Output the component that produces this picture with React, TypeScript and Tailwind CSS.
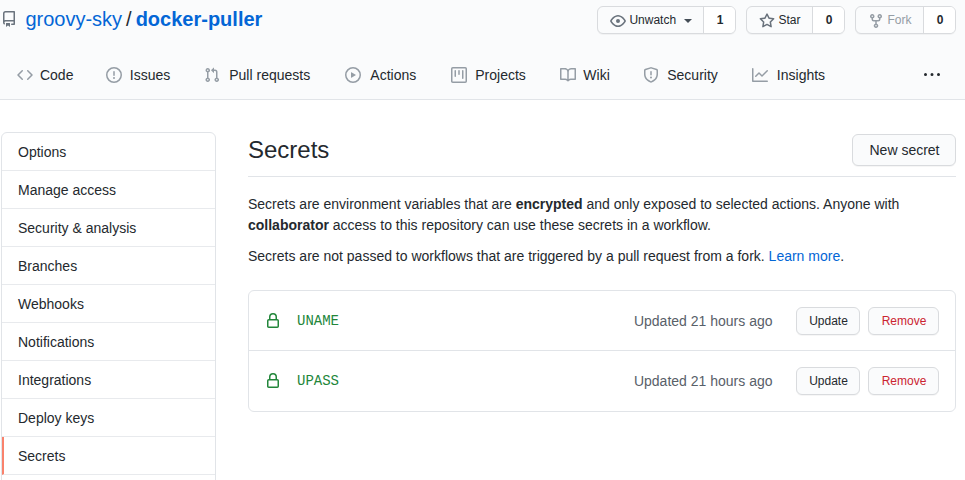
import React from "react";

const paths = {
  repo: "M2 2.5A2.5 2.5 0 014.5 0h8.75a.75.75 0 01.75.75v12.5a.75.75 0 01-.75.75h-2.5a.75.75 0 110-1.5h1.75v-2h-8a1 1 0 00-.714 1.7.75.75 0 01-1.072 1.05A2.495 2.495 0 012 11.5v-9zm10.5-1V9h-8c-.356 0-.694.074-1 .208V2.5a1 1 0 011-1h8zM5 12.25v3.25a.25.25 0 00.4.2l1.45-1.087a.25.25 0 01.3 0L8.6 15.7a.25.25 0 00.4-.2v-3.25a.25.25 0 00-.25-.25h-3.5a.25.25 0 00-.25.25z",
  code: "M4.72 3.22a.75.75 0 011.06 1.06L2.06 8l3.72 3.72a.75.75 0 11-1.06 1.06L.47 8.53a.75.75 0 010-1.06l4.25-4.25zm6.56 0a.75.75 0 10-1.06 1.06L13.94 8l-3.72 3.72a.75.75 0 101.06 1.06l4.25-4.25a.75.75 0 000-1.06l-4.25-4.25z",
  issue: "M8 1.5a6.5 6.5 0 100 13 6.5 6.5 0 000-13zM0 8a8 8 0 1116 0A8 8 0 010 8zm9 3a1 1 0 11-2 0 1 1 0 012 0zm-.25-6.25a.75.75 0 00-1.5 0v3.5a.75.75 0 001.5 0v-3.5z",
  pull: "M7.177 3.073L9.573.677A.25.25 0 0110 .854v4.792a.25.25 0 01-.427.177L7.177 3.427a.25.25 0 010-.354zM3.75 2.5a.75.75 0 100 1.5.75.75 0 000-1.5zm-2.25.75a2.25 2.25 0 113 2.122v5.256a2.251 2.251 0 11-1.5 0V5.372A2.25 2.25 0 011.5 3.25zM11 2.5h-1V4h1a1 1 0 011 1v5.628a2.251 2.251 0 101.5 0V5A2.5 2.5 0 0011 2.5zm1 10.25a.75.75 0 111.5 0 .75.75 0 01-1.5 0zM3.75 12a.75.75 0 100 1.5.75.75 0 000-1.5z",
  play: "M1.5 8a6.5 6.5 0 1113 0 6.5 6.5 0 01-13 0zM8 0a8 8 0 100 16A8 8 0 008 0zM6.379 5.227A.25.25 0 006 5.442v5.117a.25.25 0 00.379.214l4.264-2.559a.25.25 0 000-.428L6.379 5.227z",
  project: "M1.75 0A1.75 1.75 0 000 1.75v12.5C0 15.216.784 16 1.75 16h12.5A1.75 1.75 0 0016 14.25V1.75A1.75 1.75 0 0014.25 0H1.75zM1.5 1.75a.25.25 0 01.25-.25h12.5a.25.25 0 01.25.25v12.5a.25.25 0 01-.25.25H1.75a.25.25 0 01-.25-.25V1.75zM11.75 3a.75.75 0 00-.75.75v7.5a.75.75 0 001.5 0v-7.5a.75.75 0 00-.75-.75zm-8.25.75a.75.75 0 011.5 0v5.5a.75.75 0 01-1.5 0v-5.5zM8 3a.75.75 0 00-.75.75v3.5a.75.75 0 001.5 0v-3.5A.75.75 0 008 3z",
  book: "M0 1.75A.75.75 0 01.75 1h4.253c1.227 0 2.317.59 3 1.501A3.744 3.744 0 0111.006 1h4.245a.75.75 0 01.75.75v10.5a.75.75 0 01-.75.75h-4.507a2.25 2.25 0 00-1.591.659l-.622.621a.75.75 0 01-1.06 0l-.622-.621A2.25 2.25 0 005.258 13H.75a.75.75 0 01-.75-.75V1.75zm8.755 3a2.25 2.25 0 012.25-2.25H14.5v9h-3.757c-.71 0-1.4.201-1.992.572l.004-7.322zm-1.504 7.324l.004-5.073-.002-2.253A2.25 2.25 0 005.003 2.5H1.5v9h3.757a3.75 3.75 0 011.994.574z",
  shield: "M7.467.133a1.75 1.75 0 011.066 0l5.25 1.68A1.75 1.75 0 0115 3.48V7c0 1.566-.32 3.182-1.303 4.682-.983 1.498-2.585 2.813-5.032 3.855a1.7 1.7 0 01-1.33 0c-2.447-1.042-4.049-2.357-5.032-3.855C1.32 10.182 1 8.566 1 7V3.48a1.75 1.75 0 011.217-1.667l5.25-1.68zm.61 1.429a.25.25 0 00-.153 0l-5.25 1.68a.25.25 0 00-.174.238V7c0 1.358.275 2.666 1.057 3.86.784 1.194 2.121 2.34 4.366 3.297a.2.2 0 00.154 0c2.245-.956 3.582-2.104 4.366-3.298C13.225 9.666 13.5 8.36 13.5 7V3.48a.25.25 0 00-.174-.237l-5.25-1.68zM9 10.5a1 1 0 11-2 0 1 1 0 012 0zm-.25-5.75a.75.75 0 10-1.5 0v3a.75.75 0 001.5 0v-3z",
  graph: "M1.5 1.75a.75.75 0 00-1.5 0v12.5c0 .414.336.75.75.75h14.5a.75.75 0 000-1.5H1.5V1.75zm14.28 2.53a.75.75 0 00-1.06-1.06L10 7.94 7.53 5.47a.75.75 0 00-1.06 0L3.22 8.72a.75.75 0 001.06 1.06L7 7.06l2.47 2.47a.75.75 0 001.06 0l5.25-5.25z",
  dots: "M8 9a1.5 1.5 0 100-3 1.5 1.5 0 000 3zM1.5 9a1.5 1.5 0 100-3 1.5 1.5 0 000 3zm13 0a1.5 1.5 0 100-3 1.5 1.5 0 000 3z",
  eye: "M1.679 7.932c.412-.621 1.242-1.75 2.366-2.717C5.175 4.242 6.527 3.5 8 3.5c1.473 0 2.824.742 3.955 1.715 1.124.967 1.954 2.096 2.366 2.717a.119.119 0 010 .136c-.412.621-1.242 1.75-2.366 2.717C10.825 11.758 9.473 12.5 8 12.5c-1.473 0-2.824-.742-3.955-1.715C2.92 9.818 2.09 8.69 1.679 8.068a.119.119 0 010-.136zM8 2c-1.981 0-3.67.992-4.933 2.078C1.797 5.169.88 6.423.43 7.1a1.619 1.619 0 000 1.798c.45.678 1.367 1.932 2.637 3.024C4.329 13.008 6.019 14 8 14c1.981 0 3.67-.992 4.933-2.078 1.27-1.091 2.187-2.345 2.637-3.023a1.619 1.619 0 000-1.798c-.45-.678-1.367-1.932-2.637-3.023C11.671 2.992 9.981 2 8 2zm0 8a2 2 0 100-4 2 2 0 000 4z",
  star: "M8 .25a.75.75 0 01.673.418l1.882 3.815 4.21.612a.75.75 0 01.416 1.279l-3.046 2.97.719 4.192a.75.75 0 01-1.088.791L8 12.347l-3.766 1.98a.75.75 0 01-1.088-.79l.72-4.194L.818 6.374a.75.75 0 01.416-1.28l4.21-.611L7.327.668A.75.75 0 018 .25zm0 2.445L6.615 5.5a.75.75 0 01-.564.41l-3.097.45 2.24 2.184a.75.75 0 01.216.664l-.528 3.084 2.769-1.456a.75.75 0 01.698 0l2.77 1.456-.53-3.084a.75.75 0 01.216-.664l2.24-2.183-3.096-.45a.75.75 0 01-.564-.41L8 2.694v.001z",
  fork: "M5 3.25a.75.75 0 11-1.5 0 .75.75 0 011.5 0zm0 2.122a2.25 2.25 0 10-1.5 0v.878A2.25 2.25 0 005.75 8.5h1.5v2.128a2.251 2.251 0 101.5 0V8.5h1.5a2.25 2.25 0 002.25-2.25v-.878a2.25 2.25 0 10-1.5 0v.878a.75.75 0 01-.75.75h-4.5A.75.75 0 015 6.25v-.878zm3.75 7.378a.75.75 0 11-1.5 0 .75.75 0 011.5 0zm3-8.75a.75.75 0 100-1.5.75.75 0 000 1.5z",
  lock: "M4 4v2h-.25A1.75 1.75 0 002 7.75v5.5c0 .966.784 1.75 1.75 1.75h8.5A1.75 1.75 0 0014 13.25v-5.5A1.75 1.75 0 0012.25 6H12V4a4 4 0 10-8 0zm6.5 2V4a2.5 2.5 0 00-5 0v2h5zM12 7.5h.25a.25.25 0 01.25.25v5.5a.25.25 0 01-.25.25h-8.5a.25.25 0 01-.25-.25v-5.5a.25.25 0 01.25-.25H12z",
};

type IconName = keyof typeof paths;

function Icon({ name, className = "" }: { name: IconName; className?: string }) {
  return (
    <svg viewBox="0 0 16 16" width="16" height="16" fill="currentColor" className={`shrink-0 ${className}`}>
      <path fillRule="evenodd" d={paths[name]} />
    </svg>
  );
}

const tabs: { icon: IconName; label: string; width: string }[] = [
  { icon: "code", label: "Code", width: "w-[35px]" },
  { icon: "issue", label: "Issues", width: "w-[43.6px]" },
  { icon: "pull", label: "Pull requests", width: "w-[87.9px]" },
  { icon: "play", label: "Actions", width: "w-[51.3px]" },
  { icon: "project", label: "Projects", width: "w-[55.2px]" },
  { icon: "book", label: "Wiki", width: "w-[28.8px]" },
  { icon: "shield", label: "Security", width: "w-[55.2px]" },
  { icon: "graph", label: "Insights", width: "w-[53.7px]" },
];

const menu = [
  "Options",
  "Manage access",
  "Security & analysis",
  "Branches",
  "Webhooks",
  "Notifications",
  "Integrations",
  "Deploy keys",
  "Secrets",
];

function SocialButton({
  icon,
  label,
  count,
  width,
  caret = false,
  muted = false,
}: {
  icon: IconName;
  label: string;
  count: number;
  width: string;
  caret?: boolean;
  muted?: boolean;
}) {
  return (
    <div
      className={`flex h-7 ${width} overflow-hidden rounded-md border border-[#d9dbde] bg-[#fafbfc] text-xs shadow-[0_1px_0_rgba(27,31,35,0.04)]`}
    >
      <div className={`flex flex-1 items-center pl-3 ${muted ? "text-[#959da5]" : "text-[#24292e]"}`}>
        <Icon name={icon} className={`mt-0.5 mr-[3.4px] ${muted ? "text-[#959da5]" : "text-[#6a737d]"}`} />
        <span className="leading-5">{label}</span>
        {caret && (
          <span className="mt-0.5 ml-[7.6px] border-x-4 border-t-4 border-x-transparent border-t-[#444d56]" />
        )}
      </div>
      <div className="flex w-8 items-center justify-center border-l border-[#d9dbde] bg-white pl-px font-bold text-[#24292e]">
        {count}
      </div>
    </div>
  );
}

function SmallButton({ label, color, width }: { label: string; color: string; width: string }) {
  return (
    <button
      className={`h-7 ${width} rounded-md border border-[#d9dbde] bg-[#fafbfc] pl-px text-xs leading-5 shadow-[0_1px_0_rgba(27,31,35,0.04)] ${color}`}
    >
      {label}
    </button>
  );
}

export default function App() {
  return (
    <div className="h-[480px] w-[965px] overflow-hidden bg-white font-['Liberation_Sans',Arial,sans-serif] text-sm text-[#24292e]">
      <header className="flex h-[100px] flex-col justify-between border-b border-[#e1e4e8] bg-[#fafbfc]">
        <div className="flex h-[40px] items-start justify-between pt-1.5 pr-[9px] pl-[1.4px]">
          <div className="flex items-center text-xl leading-[26px]">
            <Icon name="repo" className="mr-2 text-[#6a737d]" />
            <a className="text-[#0366d6]">groovy-sky</a>
            <span className="mx-1">/</span>
            <a className="font-bold text-[#0366d6]">docker-puller</a>
          </div>
          <div className="flex gap-2.5">
            <SocialButton icon="eye" label="Unwatch" count={1} width="w-[139px]" caret />
            <SocialButton icon="star" label="Star" count={0} width="w-[99px]" />
            <SocialButton icon="fork" label="Fork" count={0} width="w-[101px]" muted />
          </div>
        </div>
        <nav className="flex h-12 items-center pr-[25px] pl-[17px]">
          <div className="flex gap-8">
            {tabs.map((t) => (
              <a key={t.label} className="flex items-center gap-[6.2px] leading-[30px]">
                <Icon name={t.icon} className="text-[#959da5]" />
                <span className={`${t.width} -mr-[0.2px] text-center whitespace-nowrap`}>{t.label}</span>
              </a>
            ))}
          </div>
          <Icon name="dots" className="ml-auto" />
        </nav>
      </header>

      <div className="flex gap-8 pt-8 pl-px">
        <aside className="h-[400px] w-[215px] shrink-0 rounded-md border border-[#e1e4e8]">
          {menu.map((m) => (
            <a
              key={m}
              className={`flex h-[38px] items-center border-b border-[#e8eaed] pt-px text-sm ${
                m === "Secrets" ? "border-l-2 border-l-[#f9826c] pl-3.5" : "pl-4"
              }`}
            >
              {m}
            </a>
          ))}
        </aside>

        <main className="w-[708px]">
          <div className="flex h-[45px] items-start justify-between border-b border-[#e1e4e8] pt-0.5">
            <h2 className="text-2xl leading-8">Secrets</h2>
            <button className="h-8 w-[104px] rounded-md border border-[#d9dbde] bg-[#fafbfc] pl-px text-sm leading-5 shadow-[0_1px_0_rgba(27,31,35,0.04)]">
              New secret
            </button>
          </div>
          <p className="mt-[17px] leading-[21px]">
            Secrets are environment variables that are <b>encrypted</b> and only exposed to selected actions. Anyone with{" "}
            <b>collaborator</b> access to this repository can use these secrets in a workflow.
          </p>
          <p className="mt-2.5 leading-[21px]">
            Secrets are not passed to workflows that are triggered by a pull request from a fork.{" "}
            <a className="text-[#0366d6]">Learn more</a>.
          </p>
          <ul className="mt-[23px] divide-y divide-[#e1e4e8] rounded-md border border-[#e1e4e8]">
            {["UNAME", "UPASS"].map((name) => (
              <li key={name} className="flex h-[60px] items-center px-4 text-[#22863a]">
                <Icon name="lock" />
                <code className="ml-4 font-['Liberation_Mono',monospace] text-sm">{name}</code>
                <span className="mr-[23.5px] ml-auto text-[#586069]">Updated 21 hours ago</span>
                <div className="flex gap-2">
                  <SmallButton label="Update" color="text-[#24292e]" width="w-16" />
                  <SmallButton label="Remove" color="text-[#cb2431]" width="w-[71px]" />
                </div>
              </li>
            ))}
          </ul>
        </main>
      </div>
    </div>
  );
}
